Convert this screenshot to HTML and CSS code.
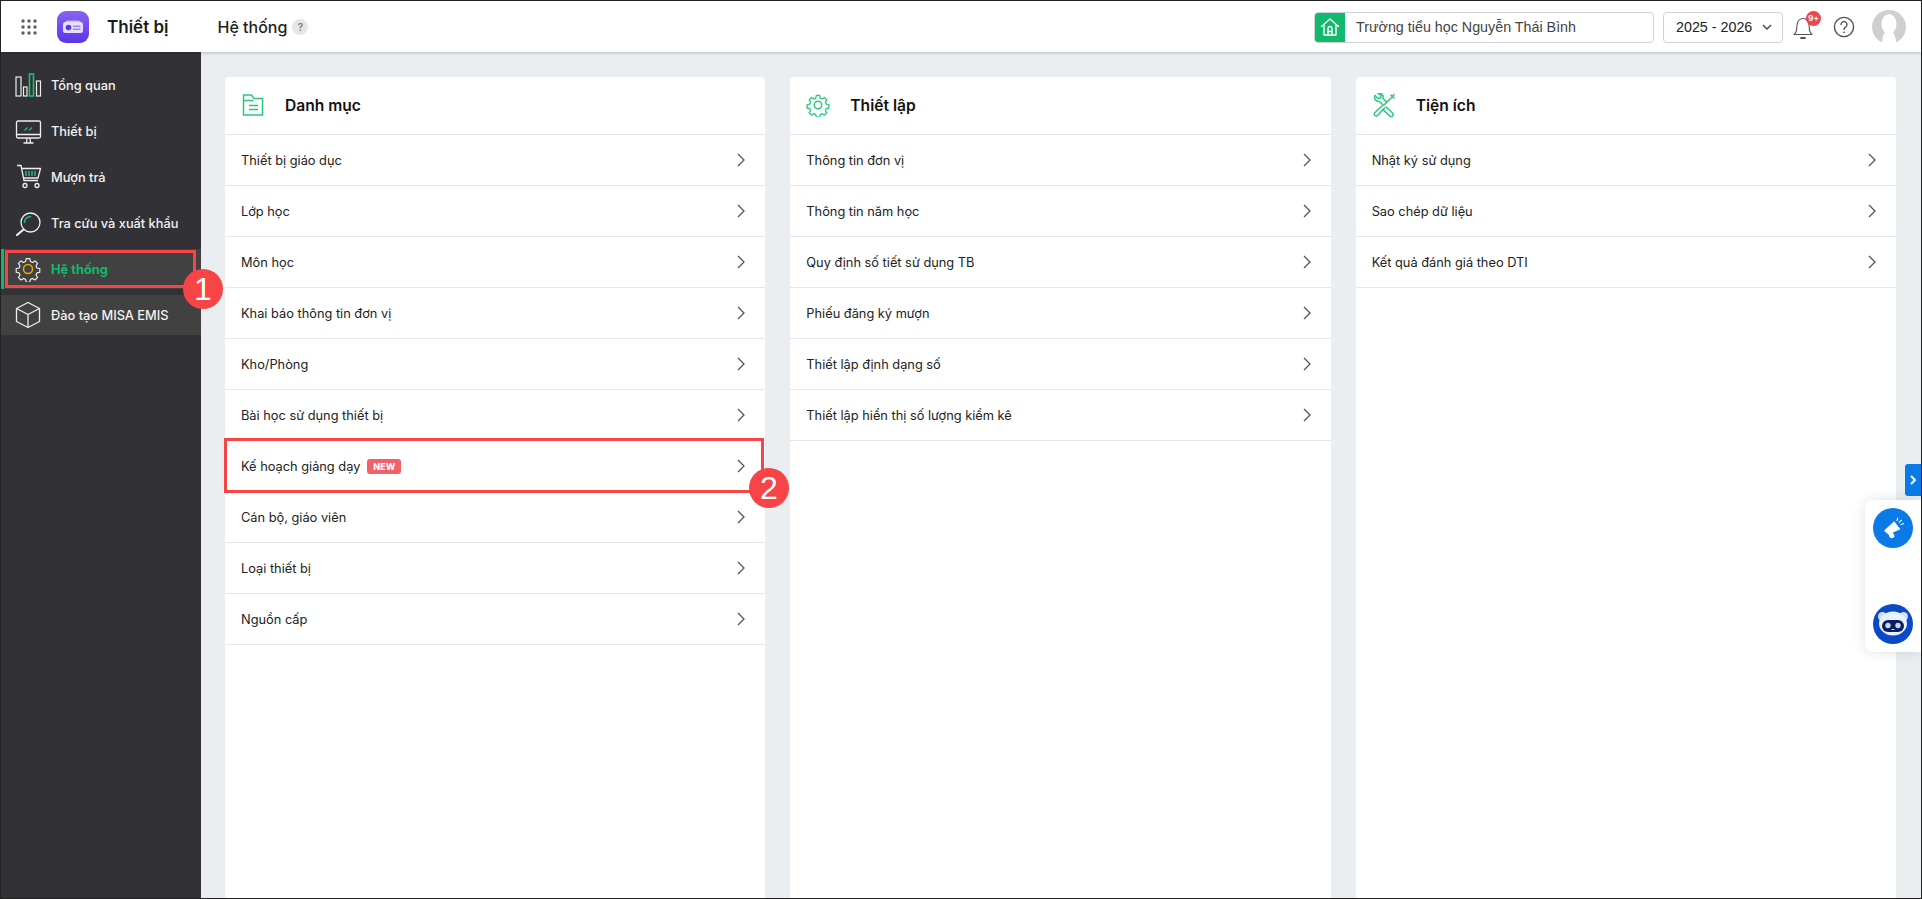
FILE: index.html
```html
<!DOCTYPE html>
<html lang="vi">
<head>
<meta charset="utf-8">
<title>Thiết bị - Hệ thống</title>
<link rel="stylesheet" href="styles.css">
</head>
<body>
<div class="app">
  <header class="topbar">
    <svg class="apps" viewBox="0 0 16 16" width="16" height="16"><g fill="#5f5f5f"><circle cx="2" cy="2" r="1.7"/><circle cx="8" cy="2" r="1.7"/><circle cx="14" cy="2" r="1.7"/><circle cx="2" cy="8" r="1.7"/><circle cx="8" cy="8" r="1.7"/><circle cx="14" cy="8" r="1.7"/><circle cx="2" cy="14" r="1.7"/><circle cx="8" cy="14" r="1.7"/><circle cx="14" cy="14" r="1.7"/></g></svg>
    <svg class="logo" viewBox="0 0 32 32" width="32" height="32"><defs><linearGradient id="lg" x1="0" y1="0" x2="0" y2="1"><stop offset="0" stop-color="#8a63f2"/><stop offset="1" stop-color="#5a35e8"/></linearGradient></defs><rect width="32" height="32" rx="9" fill="url(#lg)"/><rect x="6" y="11" width="20" height="11" rx="2.5" fill="#e6defc"/><path d="M10 9.500h12l2 1.500H8z" fill="#cbbcf8"/><circle cx="11.500" cy="16.500" r="2.800" fill="#5a35e8"/><rect x="16" y="14.500" width="7.500" height="1.500" fill="#9d85f0"/><rect x="16" y="17.500" width="7.500" height="1.500" fill="#9d85f0"/></svg>
    <div class="app-name">Thiết bị</div>
    <div class="page-title">Hệ thống</div>
    <span class="q-badge">?</span>
    <div class="top-right">
      <div class="school">
        <span class="school-ico"><svg viewBox="0 0 20 20" width="20" height="20" fill="none" stroke="#fff" stroke-width="1.400" stroke-linejoin="round" stroke-linecap="round"><path d="M1.500 9.500 10 2l8.500 7.500"/><path d="M4 8v10h12V8"/><path d="M8 18v-6.500a2 2 0 0 1 4 0V18"/><path d="M8 14.500h4"/></svg></span>
        <span class="school-name">Trường tiểu học Nguyễn Thái Bình</span>
      </div>
      <div class="year"><span>2025 - 2026</span><svg viewBox="0 0 10 6" width="10" height="6" fill="none" stroke="#444" stroke-width="1.400"><path d="M1 1l4 4 4-4"/></svg></div>
      <div class="bell">
        <svg viewBox="0 0 20 24" width="20" height="24" fill="none" stroke="#555" stroke-width="1.100" stroke-linejoin="round" stroke-linecap="round"><path d="M1 18.500c2-1.700 2.800-3.500 2.800-7.500C3.800 6 6 2.500 10 2.500S16.200 6 16.200 11c0 4 .8 5.800 2.800 7.500z"/><path d="M8 22h4" stroke-width="1.800"/></svg>
        <span class="bell-badge">9+</span>
      </div>
      <svg class="help" viewBox="0 0 22 22" width="22" height="22" fill="none" stroke="#555" stroke-width="1.400"><circle cx="11" cy="11" r="9.600"/><path d="M8 8.600a3 3 0 1 1 4.500 2.600c-1 .6-1.500 1.100-1.500 2.300" stroke-linecap="round"/><circle cx="11" cy="16.300" r=".9" fill="#555" stroke="none"/></svg>
      <svg class="avatar" viewBox="0 0 34 34" width="34" height="34"><circle cx="17" cy="17" r="17" fill="#cfcfcf"/><ellipse cx="17" cy="14" rx="7.500" ry="10" fill="#fff"/><path d="M10 34c0-5 1-9 3-12h8c2 3 3 7 3 12z" fill="#fff"/></svg>
    </div>
  </header>

  <div class="body-row">
    <nav class="sidebar">
      <a class="nav-item">
        <svg viewBox="0 0 30 26" width="30" height="26" fill="none" stroke="#eee" stroke-width="1.200"><rect x="1" y="5" width="5" height="19"/><rect x="8.500" y="15" width="3.500" height="9"/><rect x="14.500" y="2" width="4" height="22" stroke="#1fbf75" stroke-width="1.600"/><rect x="21.500" y="9" width="4" height="15"/></svg>
        <span>Tổng quan</span>
      </a>
      <a class="nav-item">
        <svg viewBox="0 0 30 26" width="30" height="26" fill="none" stroke="#eee" stroke-width="1.300"><rect x="1.500" y="3" width="24" height="17" rx="1.500"/><path d="M1.500 16.500h24M8.500 25h10M12 20l-.5 5M15 20l.5 5"/><path d="M9.500 12.500l3-3M14 12.500l3-3" stroke="#1fbf75"/></svg>
        <span>Thiết bị</span>
      </a>
      <a class="nav-item">
        <svg viewBox="0 0 30 26" width="30" height="26" fill="none" stroke="#eee" stroke-width="1.300" stroke-linejoin="round"><path d="M2 1.500h4l3 15h14"/><path d="M6.500 4.500h19l-2.500 9.500H8.500"/><path d="M11 7v5M14 7v5M17 7v5M20 7v5" stroke="#1fbf75" stroke-width="1.500"/><circle cx="10" cy="21.500" r="2"/><circle cx="22" cy="21.500" r="2"/></svg>
        <span>Mượn trả</span>
      </a>
      <a class="nav-item">
        <svg viewBox="0 0 30 26" width="30" height="26" fill="none" stroke="#eee" stroke-width="1.300" stroke-linecap="round"><circle cx="15.500" cy="12.500" r="9.500"/><path d="M15.500 6.500a6 6 0 0 0-6 6" stroke="#1fbf75" stroke-width="1.500"/><path d="M8.500 19.500 2 25" stroke-width="2.200"/></svg>
        <span>Tra cứu và xuất khẩu</span>
      </a>
      <a class="nav-item active">
        <svg viewBox="0 0 26 26" width="26" height="26" preserveAspectRatio="xMinYMid meet" fill="none" stroke="#eee" stroke-width="1.300" stroke-linejoin="round"><path d="M11 1.500h4l.7 3.200 2.300 1 2.800-1.700 2.800 2.800-1.700 2.800 1 2.300 3.200.7v4l-3.200.7-1 2.300 1.700 2.800-2.800 2.800-2.800-1.700-2.300 1-.7 3.200h-4l-.7-3.200-2.300-1-2.800 1.700-2.800-2.800 1.700-2.800-1-2.300-3.200-.7v-4l3.200-.7 1-2.300-1.700-2.800 2.800-2.800 2.800 1.700 2.300-1z" transform="translate(1.300 1.300) scale(.9)"/><circle cx="13" cy="13" r="4.500" stroke="#e5b000" stroke-width="1.500"/></svg>
        <span>Hệ thống</span>
      </a>
      <a class="nav-item light">
        <svg viewBox="0 0 26 28" width="26" height="28" preserveAspectRatio="xMinYMid meet" fill="none" stroke="#eee" stroke-width="1.300" stroke-linejoin="round"><path d="M13 1.500 24.500 7.500v13L13 26.500 1.500 20.500v-13z"/><path d="M1.500 7.500 13 13.500l11.500-6M13 13.500v13"/></svg>
        <span>Đào tạo MISA EMIS</span>
      </a>
    </nav>

    <main class="content">
      <section class="card">
        <h2 class="card-head">
          <svg viewBox="0 0 24 24" width="24" height="24" fill="none" stroke="#27c97f" stroke-width="1.500" stroke-linejoin="round"><path d="M2.500 2h8l2.500 3.500h8.500V22h-19z"/><path d="M2.500 7.500h10"/><path d="M8 12.500h9M8 16.500h9"/></svg>
          <span>Danh mục</span>
        </h2>
        <ul class="list">
          <li class="row"><span>Thiết bị giáo dục</span><svg class="chev" viewBox="0 0 8 14" width="8" height="14"><path d="M1 1l6 6-6 6"/></svg></li>
          <li class="row"><span>Lớp học</span><svg class="chev" viewBox="0 0 8 14" width="8" height="14"><path d="M1 1l6 6-6 6"/></svg></li>
          <li class="row"><span>Môn học</span><svg class="chev" viewBox="0 0 8 14" width="8" height="14"><path d="M1 1l6 6-6 6"/></svg></li>
          <li class="row"><span>Khai báo thông tin đơn vị</span><svg class="chev" viewBox="0 0 8 14" width="8" height="14"><path d="M1 1l6 6-6 6"/></svg></li>
          <li class="row"><span>Kho/Phòng</span><svg class="chev" viewBox="0 0 8 14" width="8" height="14"><path d="M1 1l6 6-6 6"/></svg></li>
          <li class="row"><span>Bài học sử dụng thiết bị</span><svg class="chev" viewBox="0 0 8 14" width="8" height="14"><path d="M1 1l6 6-6 6"/></svg></li>
          <li class="row"><span>Kế hoạch giảng dạy</span><em class="new">NEW</em><svg class="chev" viewBox="0 0 8 14" width="8" height="14"><path d="M1 1l6 6-6 6"/></svg></li>
          <li class="row"><span>Cán bộ, giáo viên</span><svg class="chev" viewBox="0 0 8 14" width="8" height="14"><path d="M1 1l6 6-6 6"/></svg></li>
          <li class="row"><span>Loại thiết bị</span><svg class="chev" viewBox="0 0 8 14" width="8" height="14"><path d="M1 1l6 6-6 6"/></svg></li>
          <li class="row"><span>Nguồn cấp</span><svg class="chev" viewBox="0 0 8 14" width="8" height="14"><path d="M1 1l6 6-6 6"/></svg></li>
        </ul>
      </section>
      <section class="card">
        <h2 class="card-head">
          <svg viewBox="0 0 26 26" width="24" height="24" fill="none" stroke="#27c97f" stroke-width="1.600" stroke-linejoin="round"><path d="M11 1.500h4l.7 3.200 2.300 1 2.800-1.700 2.800 2.800-1.700 2.800 1 2.300 3.200.7v4l-3.200.7-1 2.300 1.700 2.800-2.800 2.800-2.800-1.700-2.300 1-.7 3.200h-4l-.7-3.200-2.300-1-2.800 1.700-2.800-2.800 1.700-2.800-1-2.300-3.200-.7v-4l3.200-.7 1-2.300-1.700-2.800 2.800-2.800 2.800 1.700 2.300-1z" transform="translate(1.300 1.300) scale(.9)"/><circle cx="13" cy="13" r="4"/></svg>
          <span>Thiết lập</span>
        </h2>
        <ul class="list">
          <li class="row"><span>Thông tin đơn vị</span><svg class="chev" viewBox="0 0 8 14" width="8" height="14"><path d="M1 1l6 6-6 6"/></svg></li>
          <li class="row"><span>Thông tin năm học</span><svg class="chev" viewBox="0 0 8 14" width="8" height="14"><path d="M1 1l6 6-6 6"/></svg></li>
          <li class="row"><span>Quy định số tiết sử dụng TB</span><svg class="chev" viewBox="0 0 8 14" width="8" height="14"><path d="M1 1l6 6-6 6"/></svg></li>
          <li class="row"><span>Phiếu đăng ký mượn</span><svg class="chev" viewBox="0 0 8 14" width="8" height="14"><path d="M1 1l6 6-6 6"/></svg></li>
          <li class="row"><span>Thiết lập định dạng số</span><svg class="chev" viewBox="0 0 8 14" width="8" height="14"><path d="M1 1l6 6-6 6"/></svg></li>
          <li class="row"><span>Thiết lập hiển thị số lượng kiểm kê</span><svg class="chev" viewBox="0 0 8 14" width="8" height="14"><path d="M1 1l6 6-6 6"/></svg></li>
        </ul>
      </section>
      <section class="card">
        <h2 class="card-head">
          <svg viewBox="0 0 24 24" width="24" height="24" fill="none" stroke="#27c97f" stroke-width="1.500" stroke-linejoin="round" stroke-linecap="round"><path d="M3 2.500l3 3 2.500-.5.500-2.500-3-2c3-1 6 1.500 5 5l3.500 3.500"/><path d="M3 2.500c-1.500 3 1 6.500 4.500 6l4 4"/><path d="M12.500 11.500 20 4l2-2.500M19 2l3 3"/><path d="M10 13l-7.500 7a2 2 0 0 0 3 2.500l7-7.500"/><path d="M14 14l6.500 6a2 2 0 0 1-3 3L11 16.500"/></svg>
          <span>Tiện ích</span>
        </h2>
        <ul class="list">
          <li class="row"><span>Nhật ký sử dụng</span><svg class="chev" viewBox="0 0 8 14" width="8" height="14"><path d="M1 1l6 6-6 6"/></svg></li>
          <li class="row"><span>Sao chép dữ liệu</span><svg class="chev" viewBox="0 0 8 14" width="8" height="14"><path d="M1 1l6 6-6 6"/></svg></li>
          <li class="row"><span>Kết quả đánh giá theo DTI</span><svg class="chev" viewBox="0 0 8 14" width="8" height="14"><path d="M1 1l6 6-6 6"/></svg></li>
        </ul>
      </section>
    </main>
  </div>

  <div class="side-tab"><svg viewBox="0 0 6 10" width="6" height="10" fill="none" stroke="#fff" stroke-width="2"><path d="M1 1l4 4-4 4"/></svg></div>
  <aside class="float-panel">
    <span class="fab"><svg viewBox="0 0 24 24" width="26" height="26" fill="#fff" stroke="#fff" stroke-width="1"><path d="M4.500 14.500 13 6.500l5 6.500-10 4.500z"/><path d="M8.500 18l3-1.200 1.500 2.700-1.500 1.500-2-.5z"/><path d="M15.500 5.500l1-3M19 9l3-1.200M17.500 7l2.500-2.500" fill="none"/></svg></span>
    <span class="fab bot"><svg viewBox="0 0 40 40" width="40" height="40"><circle cx="9.500" cy="12.500" r="4.500" fill="#cfe0fb"/><circle cx="30.500" cy="12.500" r="4.500" fill="#cfe0fb"/><ellipse cx="20" cy="19.500" rx="14" ry="12" fill="#e9f1fd"/><rect x="9" y="16" width="22" height="12" rx="6" fill="#0a1f62"/><circle cx="15" cy="21.500" r="2.700" fill="#c9d8f6"/><circle cx="25" cy="21.500" r="2.700" fill="#c9d8f6"/><rect x="18.500" y="25" width="3" height="1" fill="#c9d8f6"/></svg></span>
  </aside>

  <div class="mark mark-a"></div>
  <div class="num num-a">1</div>
  <div class="mark mark-b"></div>
  <div class="num num-b">2</div>
</div>
</body>
</html>
```
FILE: styles.css
```css
* { box-sizing: border-box; }
html, body { margin: 0; height: 100%; overflow: hidden; }
body { font-family: Inter, "Noto Sans", sans-serif; color: #1f1f1f; background: #fff; }
.app { position: relative; width: 1922px; height: 899px; border: 1px solid #222; display: flex; flex-direction: column; overflow: hidden; }

.topbar { height: 51px; flex: none; display: flex; align-items: center; background: #fff; box-shadow: 0 1px 3px rgba(0,0,0,.22); position: relative; z-index: 2; padding: 1px 0 0 20px; }
.apps { flex: none; }
.logo { flex: none; margin-left: 20px; }
.app-name { font-size: 17px; font-weight: 600; margin-left: 18px; color: #1b1b1b; }
.page-title { font-size: 16px; font-weight: 500; margin-left: 49px; }
.q-badge { width: 16px; height: 16px; margin-left: 5px; border-radius: 50%; background: #e6e6e6; color: #777; font-size: 10px; font-weight: 600; display: flex; align-items: center; justify-content: center; }
.top-right { margin-left: auto; display: flex; align-items: center; padding-right: 15px; }
.school { width: 340px; height: 31px; display: flex; align-items: center; border: 1px solid #cfd3d6; border-radius: 4px; overflow: hidden; }
.school-ico { width: 31px; height: 31px; margin: -1px 0 -1px -1px; background: #10b96b; display: flex; align-items: center; justify-content: center; flex: none; }
.school-name { font-family: "Liberation Sans", sans-serif; font-size: 14.3px; margin-left: 11px; color: #444; }
.year { width: 120px; height: 31px; margin-left: 9px; border: 1px solid #cfd3d6; border-radius: 4px; display: flex; align-items: center; justify-content: space-between; padding: 0 10px 0 12px; font-family: "Liberation Sans", sans-serif; font-size: 14.3px; color: #222; }
.bell { position: relative; width: 20px; height: 24px; margin-left: 10px; margin-top: 1px; }
.bell svg { display: block; }
.bell-badge { position: absolute; left: 13px; top: -5px; width: 15px; height: 15px; border-radius: 50%; background: #f1454c; color: #fff; font-size: 8px; font-weight: 700; display: flex; align-items: center; justify-content: center; }
.help { margin-left: 20px; flex: none; }
.avatar { margin-left: 17px; flex: none; }

.body-row { flex: 1; min-height: 0; display: flex; }
.sidebar { width: 200px; flex: none; background: #323135; padding-top: 13px; display: flex; flex-direction: column; gap: 6px; }
.nav-item { height: 40px; display: flex; align-items: center; padding-left: 14px; color: #f2f2f2; font-size: 12.8px; font-weight: 500; }
.nav-item svg { width: 30px; flex: none; }
.nav-item span { margin-left: 6px; }
.nav-item.active { background: #414141; border-left: 3px solid #10b96b; padding-left: 11px; color: #10b96b; font-weight: 700; }
.nav-item.light { background: #414141; }

.content { flex: 1; min-width: 0; background: #eaeef1; padding: 25px 25px 0 24px; display: grid; grid-template-columns: repeat(3, 1fr); gap: 25px; }
.card { background: #fff; border-radius: 4px 4px 0 0; min-height: 0; }
.card-head { height: 58px; margin: 0; display: flex; align-items: center; padding: 0 0 1px 16px; gap: 20px; font-size: 15.6px; font-weight: 600; color: #111; border-bottom: 1px solid #e4e6ef; }
.list { list-style: none; margin: 0; padding: 0; }
.row { height: 51px; display: flex; align-items: center; padding: 0 20px 0 16px; font-size: 12.8px; color: #222; border-bottom: 1px solid #e4e6ef; }
.chev { margin-left: auto; fill: none; stroke: #555; stroke-width: 1.300; flex: none; }
.new { margin-left: 7px; background: #f4606a; color: #fff; font-style: normal; font-size: 9px; font-weight: 800; padding: 2px 6px; border-radius: 3px; line-height: 11px; }

.side-tab { position: absolute; right: 0; top: 463px; width: 16px; height: 32px; background: #0a7be6; border-radius: 3px 0 0 3px; display: flex; align-items: center; justify-content: center; z-index: 3; }
.float-panel { position: absolute; right: 0; top: 499px; width: 56px; height: 152px; background: #fff; border-radius: 8px 0 0 8px; box-shadow: 0 0 14px rgba(0,0,0,.12); display: flex; flex-direction: column; align-items: center; justify-content: space-between; padding: 8px 0; z-index: 3; }
.fab { width: 40px; height: 40px; border-radius: 50%; background: #0a7be6; display: flex; align-items: center; justify-content: center; flex: none; }
.fab.bot { background: #0b49c7; }

.mark { position: absolute; border: 3px solid #f74447; z-index: 4; }
.mark-a { left: 4px; top: 249px; width: 191px; height: 38px; }
.mark-b { left: 223px; top: 437px; width: 540px; height: 55px; }
.num { position: absolute; width: 40px; height: 40px; border-radius: 50%; background: #f74447; color: #fff; font-family: "Liberation Sans", sans-serif; font-size: 32px; display: flex; align-items: center; justify-content: center; z-index: 5; }
.num-a { left: 182px; top: 268px; }
.num-b { left: 748px; top: 467px; }
```
